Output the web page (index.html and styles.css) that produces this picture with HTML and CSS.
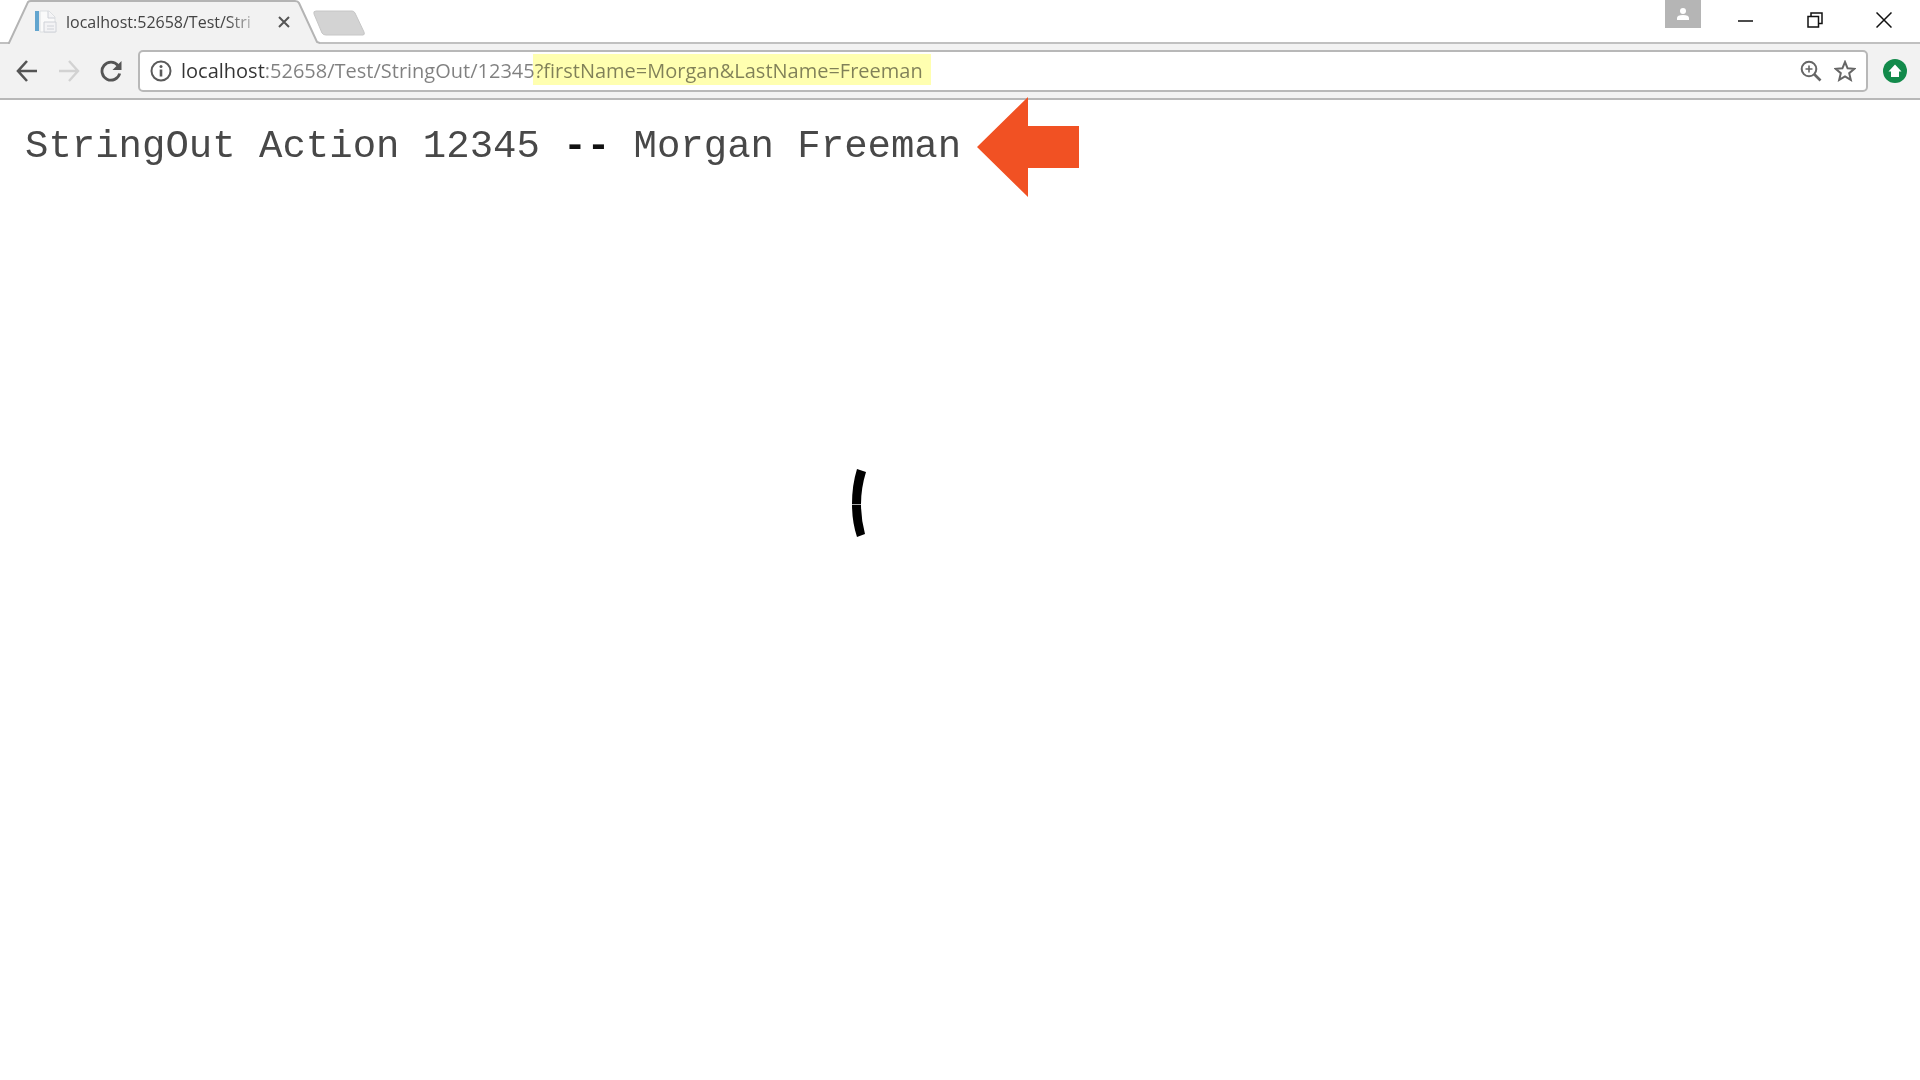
FILE: index.html
```html
<!DOCTYPE html>
<html lang="en">
<head>
<meta charset="utf-8">
<meta name="viewport" content="width=device-width, initial-scale=1">
<title>localhost:52658/Test/StringOut</title>
<link rel="stylesheet" href="styles.css">
</head>
<body>
<header class="chrome">
  <div class="tabstrip">
    <div class="tab">
      <svg class="tab-shape" viewBox="0 0 312 44" aria-hidden="true"><path d="M0 44 L1 43 L20 2 Q21 1 23 1 H287 Q290 1 291 3 L309 42 L312 44Z" fill="#f2f2f2"/><path d="M0 43 H1 L20 2 Q21 1 23 1 H287 Q290 1 291 3 L309 42 L312 43" fill="none" stroke="#b4b4b4" stroke-width="2"/></svg>
      <svg class="favicon" viewBox="0 0 24 24" aria-hidden="true"><path d="M1 1h4v20H1z" fill="#62a5cf"/><path d="M6 1h9l6 6v15H6z" fill="#fafafa" stroke="#dcdfe2"/><path d="M14 1v7h7M10 12h12v10H10z" fill="#f3f3f5" stroke="#cfd2d8"/><path d="M13 16h7M13 19h7" stroke="#cfd2d8"/></svg>
      <span class="tab-title">localhost:52658/Test/Stri</span>
      <button class="icon-button tab-close" aria-label="Close tab"><svg width="12" height="12" viewBox="0 0 12 12"><path d="M1 1l10 10M11 1L1 11" stroke="#555" stroke-width="2"/></svg></button>
    </div>
    <button class="icon-button new-tab" aria-label="New tab"><svg width="54" height="26" viewBox="0 0 54 26"><path d="M3 1H39Q41 1 42 3L51 22Q52 25 50 25H13Q10 25 9 23L1 4Q0 1 3 1Z" fill="#d3d3d3" stroke="#c6c6c6"/></svg></button>
    <div class="window-controls">
      <button class="icon-button profile" aria-label="Profile"><svg width="14" height="14" viewBox="0 0 14 14"><circle cx="7" cy="4" r="3" fill="#fff"/><path d="M1 13v-2Q1 8 7 8t6 3v2z" fill="#fff"/></svg></button>
      <button class="icon-button window-button" aria-label="Minimize"><svg width="16" height="16" viewBox="0 0 16 16"><path d="M0 9h15" stroke="#111" stroke-width="1.5"/></svg></button>
      <button class="icon-button window-button" aria-label="Restore"><svg width="16" height="16" viewBox="0 0 16 16"><path d="M1 4.500h10.500V15H1zM4 4V1h11v10.500h-3" fill="none" stroke="#111" stroke-width="1.500"/></svg></button>
      <button class="icon-button window-button" aria-label="Close"><svg width="16" height="16" viewBox="0 0 16 16"><path d="M.5.5l15 15M15.500.5l-15 15" stroke="#111" stroke-width="1.500"/></svg></button>
    </div>
  </div>
  <div class="toolbar">
    <button class="icon-button nav-button" aria-label="Back"><svg width="22" height="22" viewBox="0 0 22 22"><path d="M21 11H2M11 1L2 11l9 10" fill="none" stroke="#555" stroke-width="2.600"/></svg></button>
    <button class="icon-button nav-button" aria-label="Forward" disabled><svg width="22" height="22" viewBox="0 0 22 22"><path d="M1 11h19M11 1l9 10-9 10" fill="none" stroke="#d2d2d2" stroke-width="2.400"/></svg></button>
    <button class="icon-button nav-button" aria-label="Reload"><svg width="22" height="22" viewBox="0 0 22 22"><path d="M18 5.500A9 9 0 1 0 19.700 13.500" fill="none" stroke="#555" stroke-width="2.800"/><path d="M21.500 1v9h-9z" fill="#555"/></svg></button>
    <div class="omnibox">
      <button class="icon-button" aria-label="Site information"><svg width="22" height="22" viewBox="0 0 22 22"><circle cx="11" cy="11" r="9.500" fill="none" stroke="#5a5a5a" stroke-width="2"/><path d="M11 9.500v7" stroke="#5a5a5a" stroke-width="2.600"/><circle cx="11" cy="6.500" r="1.500" fill="#5a5a5a"/></svg></button>
      <div class="address">
        <input class="url" type="text" aria-label="Address" spellcheck="false" value="localhost:52658/Test/StringOut/12345?firstName=Morgan&amp;LastName=Freeman">
        <span class="highlight"></span>
      </div>
      <button class="icon-button" aria-label="Zoom"><svg width="22" height="22" viewBox="0 0 22 22"><circle cx="9" cy="9" r="7.300" fill="none" stroke="#666" stroke-width="2"/><path d="M9 5.500v7M5.500 9h7" stroke="#666" stroke-width="1.600"/><path d="M14 14l6.500 6.500" stroke="#666" stroke-width="2.600"/></svg></button>
      <button class="icon-button" aria-label="Bookmark"><svg width="22" height="22" viewBox="0 0 22 22"><path d="M11 2l2.600 6.300 6.800.5-5.200 4.400 1.600 6.600L11 16.300l-5.800 3.500 1.600-6.600-5.200-4.400 6.800-.5z" fill="none" stroke="#666" stroke-width="2"/></svg></button>
    </div>
    <button class="icon-button" aria-label="Update"><svg width="24" height="24" viewBox="0 0 24 24"><circle cx="12" cy="12" r="12" fill="#128a4b"/><path d="M12 5.500l6.500 7H16v5.500H8v-5.500H5.500z" fill="#fff"/></svg></button>
  </div>
</header>
<main class="page">
  <div class="result">
    <p class="output">StringOut Action 12345 <b>--</b> Morgan Freeman</p>
    <svg class="arrow" viewBox="0 0 102 100" aria-hidden="true"><path d="M0 50L51 0V29H102V71H51V100Z" fill="#f15123"/></svg>
  </div>
  <svg class="arc" viewBox="0 0 14 68" aria-hidden="true"><path d="M5 0Q0 16 0 35Q0 53 5 68L13 65Q9 50 9 35Q9 19 14 3Z" fill="#000"/><path d="M0 35.500H9" stroke="#aaa"/></svg>
</main>
</body>
</html>
```

FILE: styles.css
```css
* { box-sizing: border-box; }
body {
  margin: 0;
  min-height: 100vh;
  background: #fff;
  font-family: "Open Sans", "Noto Sans", sans-serif;
}
.icon-button {
  display: flex;
  align-items: center;
  justify-content: center;
  flex: none;
  padding: 0;
  border: 0;
  background: none;
}
.tabstrip {
  display: flex;
  height: 44px;
  padding-left: 8px;
  background: linear-gradient(#c0c0c0, #c0c0c0) bottom / 100% 2px no-repeat #fff;
}
.tab {
  position: relative;
  display: flex;
  align-items: center;
  width: 312px;
  padding: 0 30px 0 26px;
}
.tab-shape {
  position: absolute;
  inset: 0;
}
.favicon {
  position: relative;
  flex: none;
  width: 24px;
  height: 24px;
  margin-right: 8px;
}
.tab-title {
  position: relative;
  flex: 1;
  font-size: 16px;
  line-height: 24px;
  white-space: nowrap;
  color: #444;
  mask-image: linear-gradient(to right, #000 160px, transparent 198px);
}
.tab-close {
  position: relative;
  width: 12px;
  margin-left: 10px;
}
.new-tab {
  align-self: flex-start;
  margin: 10px 0 0 -7px;
}
.window-controls {
  display: flex;
  align-items: flex-start;
  margin-left: auto;
  padding-right: 2px;
}
.profile {
  width: 36px;
  height: 28px;
  margin-right: 10px;
  background: #b5b5b5;
}
.window-button {
  width: 69px;
  height: 39px;
}
.toolbar {
  display: flex;
  align-items: center;
  gap: 15px;
  height: 56px;
  padding: 0 13px 0 16px;
  background: #f2f2f2;
  border-bottom: 2px solid #b8b8b8;
}
.nav-button {
  width: 22px;
  height: 22px;
  margin-right: 5px;
}
.omnibox {
  display: flex;
  align-items: center;
  flex: 1;
  gap: 12px;
  height: 42px;
  margin-left: -4px;
  padding: 0 10px;
  background: #fff;
  border: 2px solid #b8b8b8;
  border-radius: 5px;
}
.address {
  position: relative;
  flex: 1;
  margin-left: -3px;
}
.url {
  display: block;
  width: 100%;
  padding: 0;
  border: 0;
  outline: 0;
  font: 20px/28px "Open Sans", "Noto Sans", sans-serif;
  color: transparent;
  background: linear-gradient(to right, #333 84px, #808080 84px);
  -webkit-background-clip: text;
  background-clip: text;
}
.highlight {
  position: absolute;
  left: 352px;
  top: -3px;
  width: 398px;
  height: 31px;
  background: #ffffb0;
  mix-blend-mode: multiply;
  pointer-events: none;
}
.result {
  display: flex;
  align-items: center;
  gap: 16px;
  padding-left: 25px;
}
.output {
  margin: 0;
  font: 39px/48px "Courier New", "Liberation Mono", monospace;
  color: #484848;
}
.output b { color: #111; }
.arrow {
  flex: none;
  width: 102px;
  height: 100px;
  margin: -3px 0;
}
.arc {
  position: absolute;
  left: 852px;
  top: 469px;
  width: 14px;
  height: 68px;
}
```
